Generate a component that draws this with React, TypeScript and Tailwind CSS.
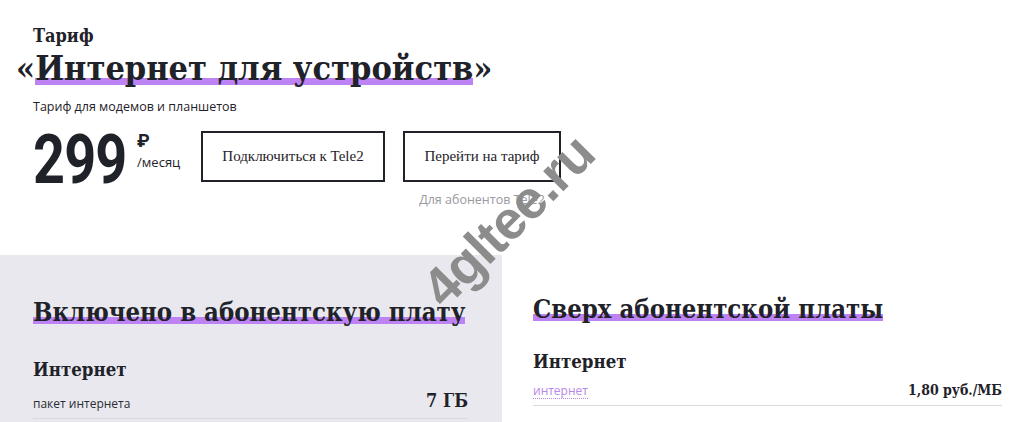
import React from 'react';

const serif = "font-['DejaVu_Serif_Condensed','DejaVu_Serif',serif] [font-stretch:condensed]";
const plainSerif = "font-['Liberation_Serif',serif]";
const sans = "font-['Open_Sans',sans-serif]";

function Marked({ children }: { children: React.ReactNode }) {
  return (
    <span className="bg-[linear-gradient(to_top,transparent_0,transparent_3px,#bd83f4_3px,#bd83f4_10px,transparent_10px)]">
      {children}
    </span>
  );
}

function Row({ label, value, link }: { label: string; value: string; link?: boolean }) {
  return (
    <div className="flex items-end justify-between border-b border-[#d9d9df] pb-[4px]">
      {link ? (
        <span className={`${sans} text-[12px] text-[#b887e8] border-b border-dotted border-[#b887e8] leading-[14px] mb-[2px]`}>{label}</span>
      ) : (
        <span className={`${sans} text-[12px] text-[#2a2c33] mb-[1px]`}>{label}</span>
      )}
      <span className={`${serif} text-[#1f2229] ${link ? 'text-[14px] font-semibold' : 'text-[18px] font-bold'}`}>{value}</span>
    </div>
  );
}

export default function App() {
  return (
    <div className="relative w-[1024px] h-[422px] overflow-hidden bg-white text-[#1f2229]">
      {/* tariff header */}
      <div className="pl-[33px] pt-[24px]">
        <div className={`${serif} font-bold text-[18px] leading-[24px]`}>Тариф</div>
        <h1 className={`${serif} font-bold text-[34px] leading-[40px] -ml-[17px]`}>
          «<Marked>Интернет для устройств</Marked>»
        </h1>
        <p className={`${sans} text-[12.5px] mt-[11px] leading-[16px]`}>Тариф для модемов и планшетов</p>

        <div className="flex items-start mt-[16px]">
          <div className="flex items-start w-[168px]">
            <span className="font-['Roboto',sans-serif] font-bold text-[68px] leading-[58px] inline-block scale-x-[0.82] origin-left tracking-[-1px]">299</span>
            <div className="-ml-[10px] flex flex-col">
              <span className="font-['Roboto',sans-serif] font-bold text-[18px] leading-[20px]">₽</span>
              <span className={`${sans} text-[13px] leading-[16px] mt-[3px]`}>/месяц</span>
            </div>
          </div>
          <button className={`${plainSerif} w-[184px] h-[51px] border-2 border-[#1f2229] text-[15px]`}>
            Подключиться к Tele2
          </button>
          <div className="ml-[18px] flex flex-col items-center w-[158px]">
            <button className={`${plainSerif} w-[158px] h-[51px] border-2 border-[#1f2229] text-[15px]`}>
              Перейти на тариф
            </button>
            <span className={`${sans} text-[12.5px] text-[#9a9aa0] mt-[9px]`}>Для абонентов Tele2</span>
          </div>
        </div>
      </div>

      {/* included / extra */}
      <div className="grid grid-cols-[502px_1fr] mt-[45px]">
        <div className="bg-[#e8e8ee] h-[167px] pl-[33px] pr-[34px] pt-[40px]">
          <h2 className={`${serif} font-bold text-[25.5px] leading-[34px] whitespace-nowrap`}>
            <Marked>Включено в абонентскую плату</Marked>
          </h2>
          <h3 className={`${serif} font-bold text-[18.5px] leading-[24px] mt-[29px]`}>Интернет</h3>
          <div className="mt-[5px]">
            <Row label="пакет интернета" value="7 ГБ" />
          </div>
        </div>
        <div className="pl-[31px] pr-[22px] pt-[37px]">
          <h2 className={`${serif} font-bold text-[25.5px] leading-[34px] whitespace-nowrap`}>
            <Marked>Сверх абонентской платы</Marked>
          </h2>
          <h3 className={`${serif} font-bold text-[18.5px] leading-[24px] mt-[24px]`}>Интернет</h3>
          <div className="mt-[6px]">
            <Row label="интернет" value="1,80 руб./МБ" link />
          </div>
        </div>
      </div>

      {/* watermark */}
      <div className="absolute left-[400px] top-[180px] -rotate-[45deg] origin-center pointer-events-none">
        <span className="font-['Liberation_Sans',sans-serif] font-bold text-[54px] text-[#8c8c8c] tracking-[-1px]">4gltee.ru</span>
      </div>
    </div>
  );
}
